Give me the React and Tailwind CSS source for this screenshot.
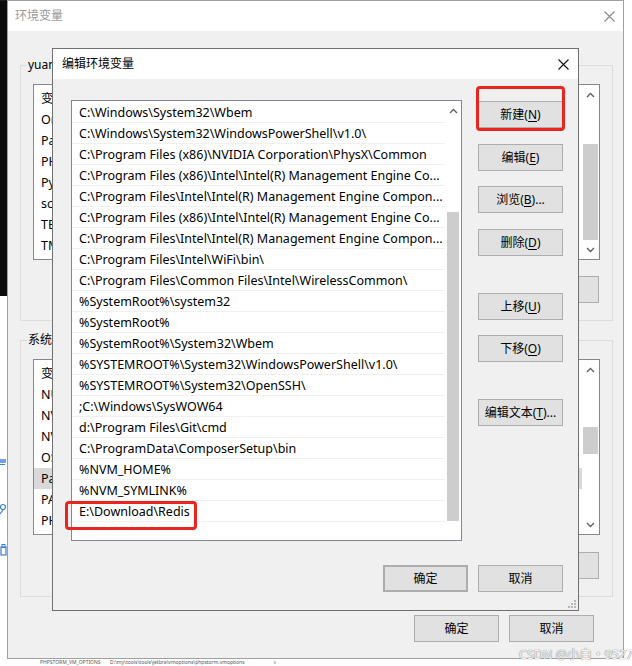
import React from "react";

const XIcon = ({ c }) => (
  <svg width="11" height="11" viewBox="0 0 11 11">
    <path d="M0.5 0.5L10.5 10.5M10.5 0.5L0.5 10.5" stroke={c} strokeWidth="1.1" />
  </svg>
);

const Chevron = ({ down }) => (
  <svg width="9" height="6" viewBox="0 0 9 6">
    <polyline
      points={down ? "1,1 4.5,4.5 8,1" : "1,5 4.5,1.5 8,5"}
      fill="none"
      stroke="#606060"
      strokeWidth="1.4"
    />
  </svg>
);

const Btn = ({ children, className = "" }) => (
  <div
    className={
      "h-[27px] w-[85px] shrink-0 flex items-center justify-center bg-[#e1e1e1] border border-[#adadad] text-[12px] leading-none text-black whitespace-nowrap " +
      className
    }
  >
    {children}
  </div>
);

const U = ({ children }) => <span className="underline underline-offset-2">{children}</span>;

const frontRows = [
  "C:\\Windows\\System32\\Wbem",
  "C:\\Windows\\System32\\WindowsPowerShell\\v1.0\\",
  "C:\\Program Files (x86)\\NVIDIA Corporation\\PhysX\\Common",
  "C:\\Program Files (x86)\\Intel\\Intel(R) Management Engine Co...",
  "C:\\Program Files\\Intel\\Intel(R) Management Engine Compon...",
  "C:\\Program Files (x86)\\Intel\\Intel(R) Management Engine Co...",
  "C:\\Program Files\\Intel\\Intel(R) Management Engine Compon...",
  "C:\\Program Files\\Intel\\WiFi\\bin\\",
  "C:\\Program Files\\Common Files\\Intel\\WirelessCommon\\",
  "%SystemRoot%\\system32",
  "%SystemRoot%",
  "%SystemRoot%\\System32\\Wbem",
  "%SYSTEMROOT%\\System32\\WindowsPowerShell\\v1.0\\",
  "%SYSTEMROOT%\\System32\\OpenSSH\\",
  ";C:\\Windows\\SysWOW64",
  "d:\\Program Files\\Git\\cmd",
  "C:\\ProgramData\\ComposerSetup\\bin",
  "%NVM_HOME%",
  "%NVM_SYMLINK%",
  "E:\\Download\\Redis",
];

const userRows = ["变量", "OneDrive", "Path", "PHPSTORM_VM_OPTIONS", "PyCharm", "scoop", "TEMP", "TMP"];
const sysRows = ["变量", "NUMBER_OF_PROCESSORS", "NVM_HOME", "NVM_SYMLINK", "OS", "Path", "PATHEXT", "PHPSTORM_VM_OPTIONS"];

function BackList({ rows, selected, spacer, thumb }) {
  return (
    <div className="h-[176px] w-full border border-[#828790] bg-white flex">
      <div className="flex-1 flex flex-col pt-[3px] overflow-hidden">
        {rows.map((r, i) => (
          <div
            key={i}
            className={
              "h-[21px] shrink-0 flex items-center pl-[7px] pt-px text-[12.5px] whitespace-nowrap " +
              (i === selected ? "bg-[#d9d9d9]" : "")
            }
          >
            {r}
          </div>
        ))}
      </div>
      <div className="w-[17px] flex flex-col">
        <div className="h-[20px] flex items-center justify-center">
          <Chevron />
        </div>
        <div className={spacer} />
        <div className={"mx-px bg-[#cdcdcd] " + thumb} />
        <div className="flex-1" />
        <div className="h-[18px] flex items-center justify-center">
          <Chevron down />
        </div>
      </div>
    </div>
  );
}

function Group({ label, className, children }) {
  return (
    <div className={"relative border border-[#dcdcdc] pl-[12px] pr-[12px] pt-[18px] pb-[17px] " + className}>
      <span className="absolute left-[6px] -top-[9px] bg-[#f0f0f0] px-px text-[12px] leading-[16px] whitespace-nowrap">
        {label}
      </span>
      {children}
    </div>
  );
}

export default function App() {
  return (
    <div className="relative w-[632px] h-[666px] bg-white overflow-hidden [font-family:'Noto_Sans','Noto_Sans_CJK_SC',sans-serif] text-black">
      {/* desktop bits */}
      <div className="absolute left-0 top-0 w-[7px] h-[296px] bg-[#0c0c0c]" />
      <div className="absolute left-0 top-0 w-[428px] h-px bg-[#1a1a1a]" />
      <div className="absolute left-0 top-[458px] w-[6px] h-[10px]">
        <svg width="6" height="10" viewBox="0 0 6 10">
          <rect x="0" y="1" width="6" height="4" fill="#6aa6e8" />
          <rect x="0" y="6" width="5" height="1" fill="#3b7fd0" />
        </svg>
      </div>
      <div className="absolute left-0 top-[503px] w-[7px] h-[12px]">
        <svg width="7" height="12" viewBox="0 0 7 12">
          <circle cx="3" cy="4" r="2.5" fill="none" stroke="#3b7fd0" strokeWidth="1.2" />
          <path d="M0 11 L3 7" stroke="#3b7fd0" strokeWidth="1.2" />
        </svg>
      </div>
      <div className="absolute left-0 top-[544px] w-[7px] h-[12px]">
        <svg width="7" height="12" viewBox="0 0 7 12">
          <rect x="1" y="3" width="5" height="8" fill="none" stroke="#3b7fd0" strokeWidth="1.2" />
          <rect x="2" y="0.5" width="3" height="3" fill="none" stroke="#3b7fd0" strokeWidth="1" />
        </svg>
      </div>

      {/* bottom strip of window behind */}
      <div className="absolute left-[30px] top-[659px] w-[262px] h-[7px] flex items-center text-[5px] leading-none text-[#555] whitespace-nowrap">
        <span className="w-[80px] pl-[10px]">PHPSTORM_VM_OPTIONS</span>
        <span>D:\my\tools\tools\jetbra\vmoptions\phpstorm.vmoptions</span>
        <span className="ml-auto mr-[16px] text-[#777]">v</span>
      </div>

      {/* back dialog */}
      <div className="absolute left-[7px] top-0 w-[617px] h-[659px] border border-[#a0a0a0] flex flex-col">
        <div className="h-[30px] shrink-0 bg-white flex items-center justify-between pl-[7px] pr-[8px]">
          <span className="text-[12px] text-[#9a9a9a]">环境变量</span>
          <XIcon c="#8a8a8a" />
        </div>
        <div className="flex-1 bg-[#f0f0f0] flex flex-col pl-[12px] pr-[10px]">
          <Group label="yuan 的用户变量(U)" className="mt-[34px]">
            <BackList rows={userRows} selected={-1} spacer="h-[39px]" thumb="h-[96px]" />
            <div className="mt-[16px] flex justify-end gap-[10px] pr-px">
              <Btn>新建(N)...</Btn>
              <Btn>编辑(E)...</Btn>
              <Btn>删除(D)</Btn>
            </div>
          </Group>
          <Group label="系统变量(S)" className="mt-[19px]">
            <BackList rows={sysRows} selected={5} spacer="h-[47px]" thumb="h-[27px]" />
            <div className="mt-[17px] flex justify-end gap-[10px] pr-px">
              <Btn>新建(W)...</Btn>
              <Btn>编辑(I)...</Btn>
              <Btn>删除(L)</Btn>
            </div>
          </Group>
          <div className="mt-[18px] flex justify-end gap-[10px] pr-[19px]">
            <Btn>确定</Btn>
            <Btn>取消</Btn>
          </div>
        </div>
      </div>

      {/* front dialog */}
      <div className="absolute left-[52px] top-[48px] w-[527px] h-[563px] border border-[#707070] flex flex-col">
        <div className="h-[30px] shrink-0 bg-white flex items-center justify-between pl-[9px] pr-[9px]">
          <span className="text-[12px]">编辑环境变量</span>
          <XIcon c="#111" />
        </div>
        <div className="relative flex-1 bg-[#f0f0f0] flex flex-col pl-[18px] pt-[21px]">
          <div className="flex">
            <div className="relative">
              <div className="w-[391px] h-[441px] border border-[#828790] bg-white flex">
                <div className="w-[373px] flex flex-col pt-px">
                  {frontRows.map((r, i) => (
                    <div
                      key={i}
                      className="h-[21px] shrink-0 flex items-center pl-[7px] pr-[4px] pt-[2px] border-b border-[#f0f0f0] text-[12.5px] whitespace-nowrap overflow-hidden"
                    >
                      {r}
                    </div>
                  ))}
                </div>
                <div className="w-[16px] flex flex-col">
                  <div className="h-[20px] flex items-center justify-center">
                    <Chevron />
                  </div>
                  <div className="h-[91px]" />
                  <div className="h-[309px] mx-[2px] bg-[#cdcdcd]" />
                </div>
              </div>
              <div className="absolute left-[-6px] top-[401px] w-[132px] h-[29px] border-[3px] border-[#e8251f] rounded-[4px]" />
            </div>
            <div className="ml-[16px] mt-px flex flex-col">
              <div className="relative">
                <Btn>
                  新建(<U>N</U>)
                </Btn>
                <div className="absolute -left-[2px] -top-[15px] -right-[2px] -bottom-[3px] border-[3px] border-[#e8251f] rounded-[4px]" />
              </div>
              <Btn className="mt-[16px]">
                编辑(<U>E</U>)
              </Btn>
              <Btn className="mt-[15px]">
                浏览(<U>B</U>)...
              </Btn>
              <Btn className="mt-[16px]">
                删除(<U>D</U>)
              </Btn>
              <Btn className="mt-[37px]">
                上移(<U>U</U>)
              </Btn>
              <Btn className="mt-[15px]">
                下移(<U>O</U>)
              </Btn>
              <Btn className="mt-[37px]">
                编辑文本(<U>T</U>)...
              </Btn>
            </div>
          </div>
          <div className="mt-[24px] flex justify-end gap-[10px] pr-[15px]">
            <Btn className="border-2 border-[#0078d7]">确定</Btn>
            <Btn>取消</Btn>
          </div>
          <div className="absolute right-[2px] bottom-[2px] w-[8px] h-[8px]">
            <svg width="8" height="8" viewBox="0 0 8 8">
              <rect x="6" y="0" width="2" height="2" fill="#b8b8b8" />
              <rect x="3" y="3" width="2" height="2" fill="#b8b8b8" />
              <rect x="6" y="3" width="2" height="2" fill="#b8b8b8" />
              <rect x="0" y="6" width="2" height="2" fill="#b8b8b8" />
              <rect x="3" y="6" width="2" height="2" fill="#b8b8b8" />
              <rect x="6" y="6" width="2" height="2" fill="#b8b8b8" />
            </svg>
          </div>
        </div>
      </div>

      {/* watermark */}
      <div className="absolute left-[519px] top-[646px] text-[12.5px] leading-[18px] text-[#f2f2f2] whitespace-nowrap [text-shadow:0_0_1px_#8a8a8a,0_0_1px_#8a8a8a]">
        CSDN @小白・9527
      </div>
    </div>
  );
}
